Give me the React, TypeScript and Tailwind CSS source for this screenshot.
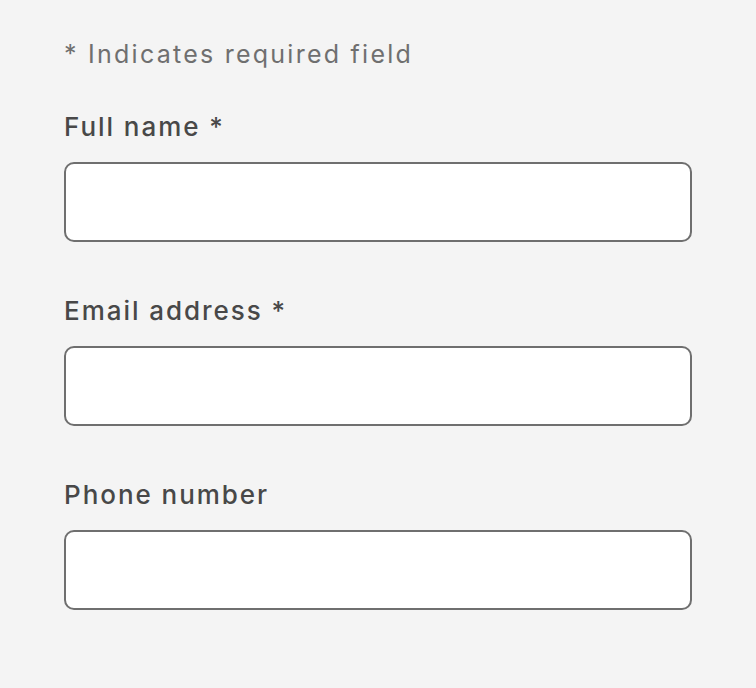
export default function App() {
  const fields = [
    { label: 'Full name *', type: 'text' },
    { label: 'Email address *', type: 'email' },
    { label: 'Phone number', type: 'tel' },
  ]

  return (
    <main className="min-h-[688px] bg-[#f4f4f4] px-16 pt-[38px] font-['Inter',sans-serif]">
      <p className="text-[25px] leading-[32px] tracking-[0.09em] text-[#6f6f6f]">
        * Indicates required field
      </p>
      <form className="mt-[41px] flex flex-col gap-[53px]">
        {fields.map((field) => (
          <div key={field.label} className="flex flex-col gap-[19px]">
            <label className="text-[26px] leading-[32px] font-medium tracking-[0.075em] text-[#484848]">
              {field.label}
            </label>
            <input
              type={field.type}
              className="h-[80px] w-[628px] rounded-[10px] border-2 border-[#6f6f6f] bg-white px-4 outline-none"
            />
          </div>
        ))}
      </form>
    </main>
  )
}
